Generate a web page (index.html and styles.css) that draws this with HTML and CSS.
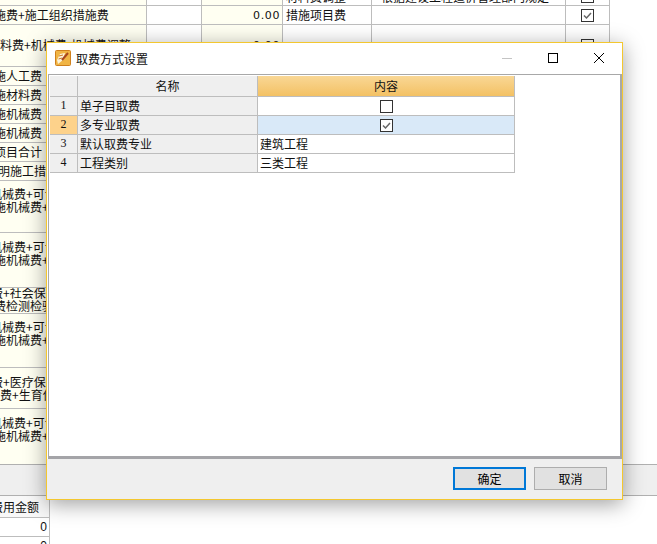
FILE: index.html
```html
<!DOCTYPE html>
<html lang="zh-CN">
<head>
  <meta charset="UTF-8">
  <title>取费方式设置</title>
  <link rel="stylesheet" href="styles.css">
</head>
<body>
  <div class="app">
    <div class="sheet">
      <div class="row h6">
        <div class="cell c1"></div><div class="cell c2"></div><div class="cell c3"></div>
        <div class="cell c4 top-text"><span>材料费调整</span></div><div class="cell c5 top-text inset"><span>根据建设工程造价管理部门规定</span></div>
        <div class="cell c6 top-box"><span class="box"></span></div>
      </div>
      <div class="row h19">
        <div class="cell c1"><span class="cut">施费+施工组织措施费</span></div><div class="cell c2"></div><div class="cell c3 num">0.00</div>
        <div class="cell c4">措施项目费</div><div class="cell c5"></div>
        <div class="cell c6"><span class="box"><svg viewBox="0 0 11 11"><path d="M2 5.5 4.5 8 9 3" /></svg></span></div>
      </div>
      <div class="row h42">
        <div class="cell c1"><span>料费+机械费-机械费调整</span></div><div class="cell c2"></div><div class="cell c3 num">0.00</div>
        <div class="cell c4"></div><div class="cell c5"></div>
        <div class="cell c6"><span class="box"></span></div>
      </div>
      <div class="row h19"><div class="cell c1"><span class="cut">施人工费</span></div></div>
      <div class="row h19"><div class="cell c1"><span class="cut">施材料费</span></div></div>
      <div class="row h19"><div class="cell c1"><span class="cut">施机械费</span></div></div>
      <div class="row h19"><div class="cell c1"><span class="cut">施机械费</span></div></div>
      <div class="row h19"><div class="cell c1"><span class="cut">项目合计</span></div></div>
      <div class="row h19"><div class="cell c1"><span class="cut-s">明施工措施</span></div></div>
      <div class="row h52"><div class="cell c1"><span class="two"><span class="cut-l">机械费+可计</span><span class="cut">施机械费+</span></span></div></div>
      <div class="row h55"><div class="cell c1"><span class="two"><span class="cut-l">机械费+可计</span><span class="cut">施机械费+</span></span></div></div>
      <div class="row h26"><div class="cell c1"><span class="two flat"><span class="cut-m">费+社会保</span><span class="cut">费检测检验</span></span></div></div>
      <div class="row h54"><div class="cell c1"><span class="two high"><span class="cut-l">机械费+可计</span><span class="cut">施机械费+</span></span></div></div>
      <div class="row h41"><div class="cell c1"><span class="two low"><span class="cut-m">费+医疗保</span><span>费+生育保</span></span></div></div>
      <div class="row h55 last"><div class="cell c1"><span class="two high"><span class="cut-l">机械费+可计</span><span class="cut">施机械费+</span></span></div></div>
    </div>
    <div class="strip"></div>
    <div class="fee-table">
      <div class="fee-head"><span class="cut-m">费用金额</span></div>
      <div class="fee-val">0</div>
      <div class="fee-val">0</div>
    </div>
  </div>

  <div class="dialog">
    <div class="titlebar">
      <svg class="app-icon" width="16" height="16" viewBox="0 0 16 16">
        <rect x="0.5" y="0.5" width="15" height="15" rx="1" fill="#f0b444" stroke="#d0801c" />
        <path d="M2 10 5 4 10 3 8 10 3 14Z" fill="#fdf3d8" />
        <path d="M7 10 13 3" stroke="#a8461d" stroke-width="2" />
        <path d="M4 6 8 5M3.5 9 7 8" stroke="#c9772a" fill="none" />
      </svg>
      <span class="title">取费方式设置</span>
      <div class="win-btns">
        <span class="win-btn"><svg width="12" height="12" viewBox="0 0 12 12"><path d="M1 6.5H11" stroke="#c4c4c4" /></svg></span>
        <span class="win-btn"><svg width="12" height="12" viewBox="0 0 12 12"><rect x="1.5" y="1.5" width="9" height="9" fill="none" stroke="#000" /></svg></span>
        <span class="win-btn"><svg width="12" height="12" viewBox="0 0 12 12"><path d="M1 1 11 11M11 1 1 11" stroke="#000" /></svg></span>
      </div>
    </div>
    <div class="client">
      <div class="grid">
        <div class="gh idx"></div><div class="gh name">名称</div><div class="gh content">内容</div>
        <div class="gi">1</div><div class="gn">单子目取费</div><div class="gc center"><span class="box"></span></div>
        <div class="gi current">2</div><div class="gn">多专业取费</div><div class="gc center selected"><span class="box"><svg viewBox="0 0 11 11"><path d="M2 5.5 4.5 8 9 3" /></svg></span></div>
        <div class="gi">3</div><div class="gn">默认取费专业</div><div class="gc">建筑工程</div>
        <div class="gi">4</div><div class="gn">工程类别</div><div class="gc">三类工程</div>
      </div>
    </div>
    <div class="footer">
      <button class="btn btn-ok">确定</button>
      <button class="btn">取消</button>
    </div>
  </div>
</body>
</html>
```

FILE: styles.css
```css
* {
  box-sizing: border-box;
}
html, body {
  margin: 0;
  height: 100%;
  overflow: hidden;
  background: #fff;
}
body {
  font-family: "Noto Sans CJK SC", "Liberation Sans", sans-serif;
  font-size: 12px;
  color: #111;
  position: relative;
}
.app {
  display: flex;
  flex-direction: column;
}

/* sheet behind the dialog */
.sheet {
  width: 610px;
}
.row {
  display: grid;
  grid-template-columns: 147px 55px 81px 89px 194px 44px;
  border-bottom: 1px solid #bdbdbd;
  background: #fff;
}
.row.last {
  border-bottom: 0;
}
.h6 { height: 6px; }
.h19 { height: 19px; }
.h42 { height: 42px; }
.h52 { height: 52px; }
.h55 { height: 55px; }
.h26 { height: 26px; }
.h54 { height: 54px; }
.h41 { height: 41px; }
.cell {
  overflow: hidden;
  white-space: nowrap;
  border-right: 1px solid #bdbdbd;
  line-height: 17px;
  display: flex;
  align-items: center;
  padding-left: 3px;
}
.c1, .c3 {
  background: #fffff2;
}
.c1 {
  padding-left: 0;
  padding-bottom: 2px;
}
.c4 {
  padding-bottom: 1px;
}
.c6 {
  justify-content: center;
  padding-left: 0;
}
.num {
  justify-content: flex-end;
  padding-right: 2px;
  font-family: "DejaVu Sans", sans-serif;
  font-size: 11px;
  letter-spacing: 0.6px;
}
.top-text {
  align-items: flex-end;
  line-height: 12px;
  padding-bottom: 0;
}
.top-text span {
  margin-bottom: 2px;
}
.inset {
  padding-left: 9px;
}
.top-box {
  align-items: flex-end;
}
.top-box .box {
  margin-bottom: 2px;
}
.cut { margin-left: -6px; }
.cut-s { margin-left: -2px; }
.cut-m { margin-left: -9px; }
.cut-l { margin-left: -10px; }
.two {
  display: flex;
  flex-direction: column;
  line-height: 13px;
  margin-top: -12px;
}
.two.flat { margin-top: -2px; }
.two.high { margin-top: -14px; }
.two.low { margin-top: 2px; }
.strip {
  height: 32px;
  background: #efefef;
  border-top: 1px solid #b0b0b0;
  border-bottom: 1px solid #b0b0b0;
}
.fee-table {
  width: 50px;
  border-right: 1px solid #bdbdbd;
}
.fee-head {
  height: 22px;
  line-height: 21px;
  background: #f8f8f8;
  border-bottom: 1px solid #bdbdbd;
  white-space: nowrap;
  overflow: hidden;
}
.fee-val {
  height: 19px;
  line-height: 18px;
  text-align: right;
  padding-right: 2px;
  border-bottom: 1px solid #bdbdbd;
  font-family: "Liberation Sans", sans-serif;
}

/* checkboxes */
.box {
  display: block;
  width: 13px;
  height: 13px;
  flex: none;
  border: 1px solid #333;
  background: #fff;
}
.box svg {
  display: block;
  width: 11px;
  height: 11px;
  fill: none;
  stroke: #666;
  stroke-width: 1.5;
}

/* dialog */
.dialog {
  position: absolute;
  left: 46px;
  top: 42px;
  width: 577px;
  height: 458px;
  display: flex;
  flex-direction: column;
  background: #fff;
  border: 1px solid #f3c72f;
  box-shadow: 0 4px 20px rgba(0, 0, 0, 0.38);
}
.titlebar {
  height: 31px;
  display: flex;
  align-items: center;
  padding-left: 8px;
  padding-bottom: 2px;
  flex: none;
}
.app-icon {
  flex: none;
}
.title {
  margin-left: 5px;
  margin-top: 1px;
  font-size: 12px;
}
.win-btns {
  margin-left: auto;
  display: flex;
}
.win-btn {
  width: 46px;
  height: 29px;
  display: flex;
  align-items: center;
  justify-content: center;
}
.client {
  flex: 1;
  margin-left: 1px;
  border-top: 1px solid #a8a8a8;
  border-left: 1px solid #a8a8a8;
  border-right: 2px solid #a8a8a8;
  border-bottom: 3px solid #a4a4a8;
  padding: 1px;
}
.grid {
  display: grid;
  width: 465px;
  grid-template-columns: 28px 180px 256px;
  grid-template-rows: 21px 19px 19px 19px 19px;
  border-right: 1px solid #bdbdbd;
}
.grid > div {
  border-bottom: 1px solid #bdbdbd;
  display: flex;
  align-items: center;
  white-space: nowrap;
  padding-bottom: 1px;
}
.gh {
  background: #efefef;
  justify-content: center;
  border-right: 1px solid #bdbdbd;
}
.gh.content {
  background: linear-gradient(to bottom, #f9d795, #f3c164);
  border-right: 0;
}
.gi {
  background: #efefef;
  justify-content: center;
  border-right: 1px solid #bdbdbd;
  font-family: "Liberation Serif", serif;
}
.gi.current {
  background: #fdd28b;
}
.gn {
  background: #efefef;
  padding-left: 2px;
  border-right: 1px solid #bdbdbd;
}
.gc {
  padding-left: 2px;
  background: #fff;
}
.grid > .gc.center {
  justify-content: center;
  padding-left: 0;
  padding-bottom: 0;
}
.gc.selected {
  background: #d9e9f8;
}
.footer {
  height: 40px;
  flex: none;
  background: #efefef;
  display: flex;
  justify-content: flex-end;
  align-items: center;
  gap: 8px;
  padding-right: 15px;
  padding-bottom: 2px;
}
.btn {
  width: 73px;
  height: 23px;
  padding: 0;
  font: inherit;
  font-size: 12px;
  color: #000;
  background: #e1e1e1;
  border: 1px solid #adadad;
}
.btn-ok {
  border: 2px solid #0078d7;
}
```
